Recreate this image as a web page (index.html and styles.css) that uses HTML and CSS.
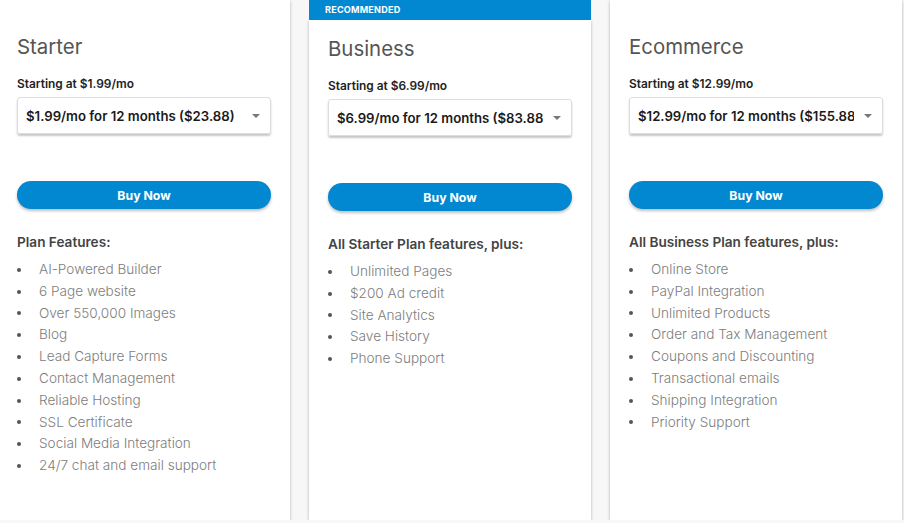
FILE: index.html
```html
<!DOCTYPE html>
<html lang="en">
<head>
  <meta charset="UTF-8">
  <meta name="viewport" content="width=device-width, initial-scale=1.0">
  <title>Plans</title>
  <link rel="stylesheet" href="styles.css">
</head>
<body>
  <div class="plans">
    <div class="plan">
      <h2 class="plan-name">Starter</h2>
      <div class="starting">Starting at $1.99/mo</div>
      <div class="term-select">
        <span class="term-text">$1.99/mo for 12 months ($23.88)</span>
        <span class="caret"></span>
      </div>
      <button class="buy-btn">Buy Now</button>
      <div class="features-title">Plan Features:</div>
      <ul class="features">
        <li>AI-Powered Builder</li>
        <li>6 Page website</li>
        <li>Over 550,000 Images</li>
        <li>Blog</li>
        <li>Lead Capture Forms</li>
        <li>Contact Management</li>
        <li>Reliable Hosting</li>
        <li>SSL Certificate</li>
        <li>Social Media Integration</li>
        <li>24/7 chat and email support</li>
      </ul>
    </div>

    <div class="plan recommended">
      <div class="ribbon">RECOMMENDED</div>
      <h2 class="plan-name">Business</h2>
      <div class="starting">Starting at $6.99/mo</div>
      <div class="term-select">
        <span class="term-text">$6.99/mo for 12 months ($83.88)</span>
        <span class="caret"></span>
      </div>
      <button class="buy-btn">Buy Now</button>
      <div class="features-title">All Starter Plan features, plus:</div>
      <ul class="features">
        <li>Unlimited Pages</li>
        <li>$200 Ad credit</li>
        <li>Site Analytics</li>
        <li>Save History</li>
        <li>Phone Support</li>
      </ul>
    </div>

    <div class="plan">
      <h2 class="plan-name">Ecommerce</h2>
      <div class="starting">Starting at $12.99/mo</div>
      <div class="term-select">
        <span class="term-text">$12.99/mo for 12 months ($155.88)</span>
        <span class="caret"></span>
      </div>
      <button class="buy-btn">Buy Now</button>
      <div class="features-title">All Business Plan features, plus:</div>
      <ul class="features">
        <li>Online Store</li>
        <li>PayPal Integration</li>
        <li>Unlimited Products</li>
        <li>Order and Tax Management</li>
        <li>Coupons and Discounting</li>
        <li>Transactional emails</li>
        <li>Shipping Integration</li>
        <li>Priority Support</li>
      </ul>
    </div>
  </div>
</body>
</html>
```

FILE: styles.css
```css
body {
  margin: 0;
  background-color: #f7f7f7;
  font-family: Inter, "Noto Sans", sans-serif;
  color: #333;
  overflow: hidden;
}

.plans {
  display: flex;
  gap: 19px;
  margin-left: -2px;
}

.plan {
  width: 254px;
  height: 485px;
  padding: 35px 19px 0 19px;
  background-color: #fff;
  box-shadow: 0 1px 3px rgba(0, 0, 0, 0.28);
}

.plan.recommended {
  width: 244px;
  height: 483px;
  padding-top: 17px;
  margin-top: 20px;
  position: relative;
}

.ribbon {
  position: absolute;
  top: -20px;
  left: 0;
  right: 0;
  height: 20px;
  padding-left: 16px;
  background-color: #0288d1;
  color: #fff;
  font-size: 9.1px;
  font-weight: 700;
  line-height: 20px;
  letter-spacing: 0.2px;
}

.plan-name {
  margin: 0;
  font-size: 20.4px;
  font-weight: 400;
  line-height: 24px;
  color: #555;
}

.starting {
  margin-top: 17px;
  font-size: 11.9px;
  font-weight: 600;
  line-height: 16px;
  color: #222;
}

.term-select {
  display: flex;
  align-items: center;
  height: 35px;
  margin-top: 5px;
  padding: 0 10px 0 8px;
  border: 1px solid #ddd;
  border-radius: 3px;
  box-shadow: 0 2px 2px rgba(0, 0, 0, 0.22);
}

.term-text {
  flex: 1;
  overflow: hidden;
  white-space: nowrap;
  font-size: 13.2px;
  font-weight: 600;
  color: #1a1a1a;
}

.caret {
  margin-left: 10px;
  width: 0;
  height: 0;
  border-left: 4px solid transparent;
  border-right: 4px solid transparent;
  border-top: 4px solid #777;
}

.buy-btn {
  display: block;
  width: 100%;
  height: 28px;
  margin-top: 47px;
  border: none;
  border-radius: 14px;
  background-color: #0288d1;
  color: #fff;
  font-family: inherit;
  font-size: 12.3px;
  font-weight: 700;
  box-shadow: 0 2px 3px rgba(0, 0, 0, 0.25);
  cursor: pointer;
}

.features-title {
  margin-top: 24px;
  font-size: 13.6px;
  font-weight: 600;
  line-height: 18px;
  color: #444;
}

.features {
  margin: 8px 0 0 0;
  padding: 0;
  list-style: none;
}

.features li {
  display: flex;
  align-items: center;
  font-size: 13.6px;
  font-weight: 300;
  line-height: 21.8px;
  color: #7d7d7d;
}

.features li::before {
  content: "";
  width: 4px;
  height: 4px;
  margin-right: 18px;
  border-radius: 50%;
  background-color: #555;
}
```
